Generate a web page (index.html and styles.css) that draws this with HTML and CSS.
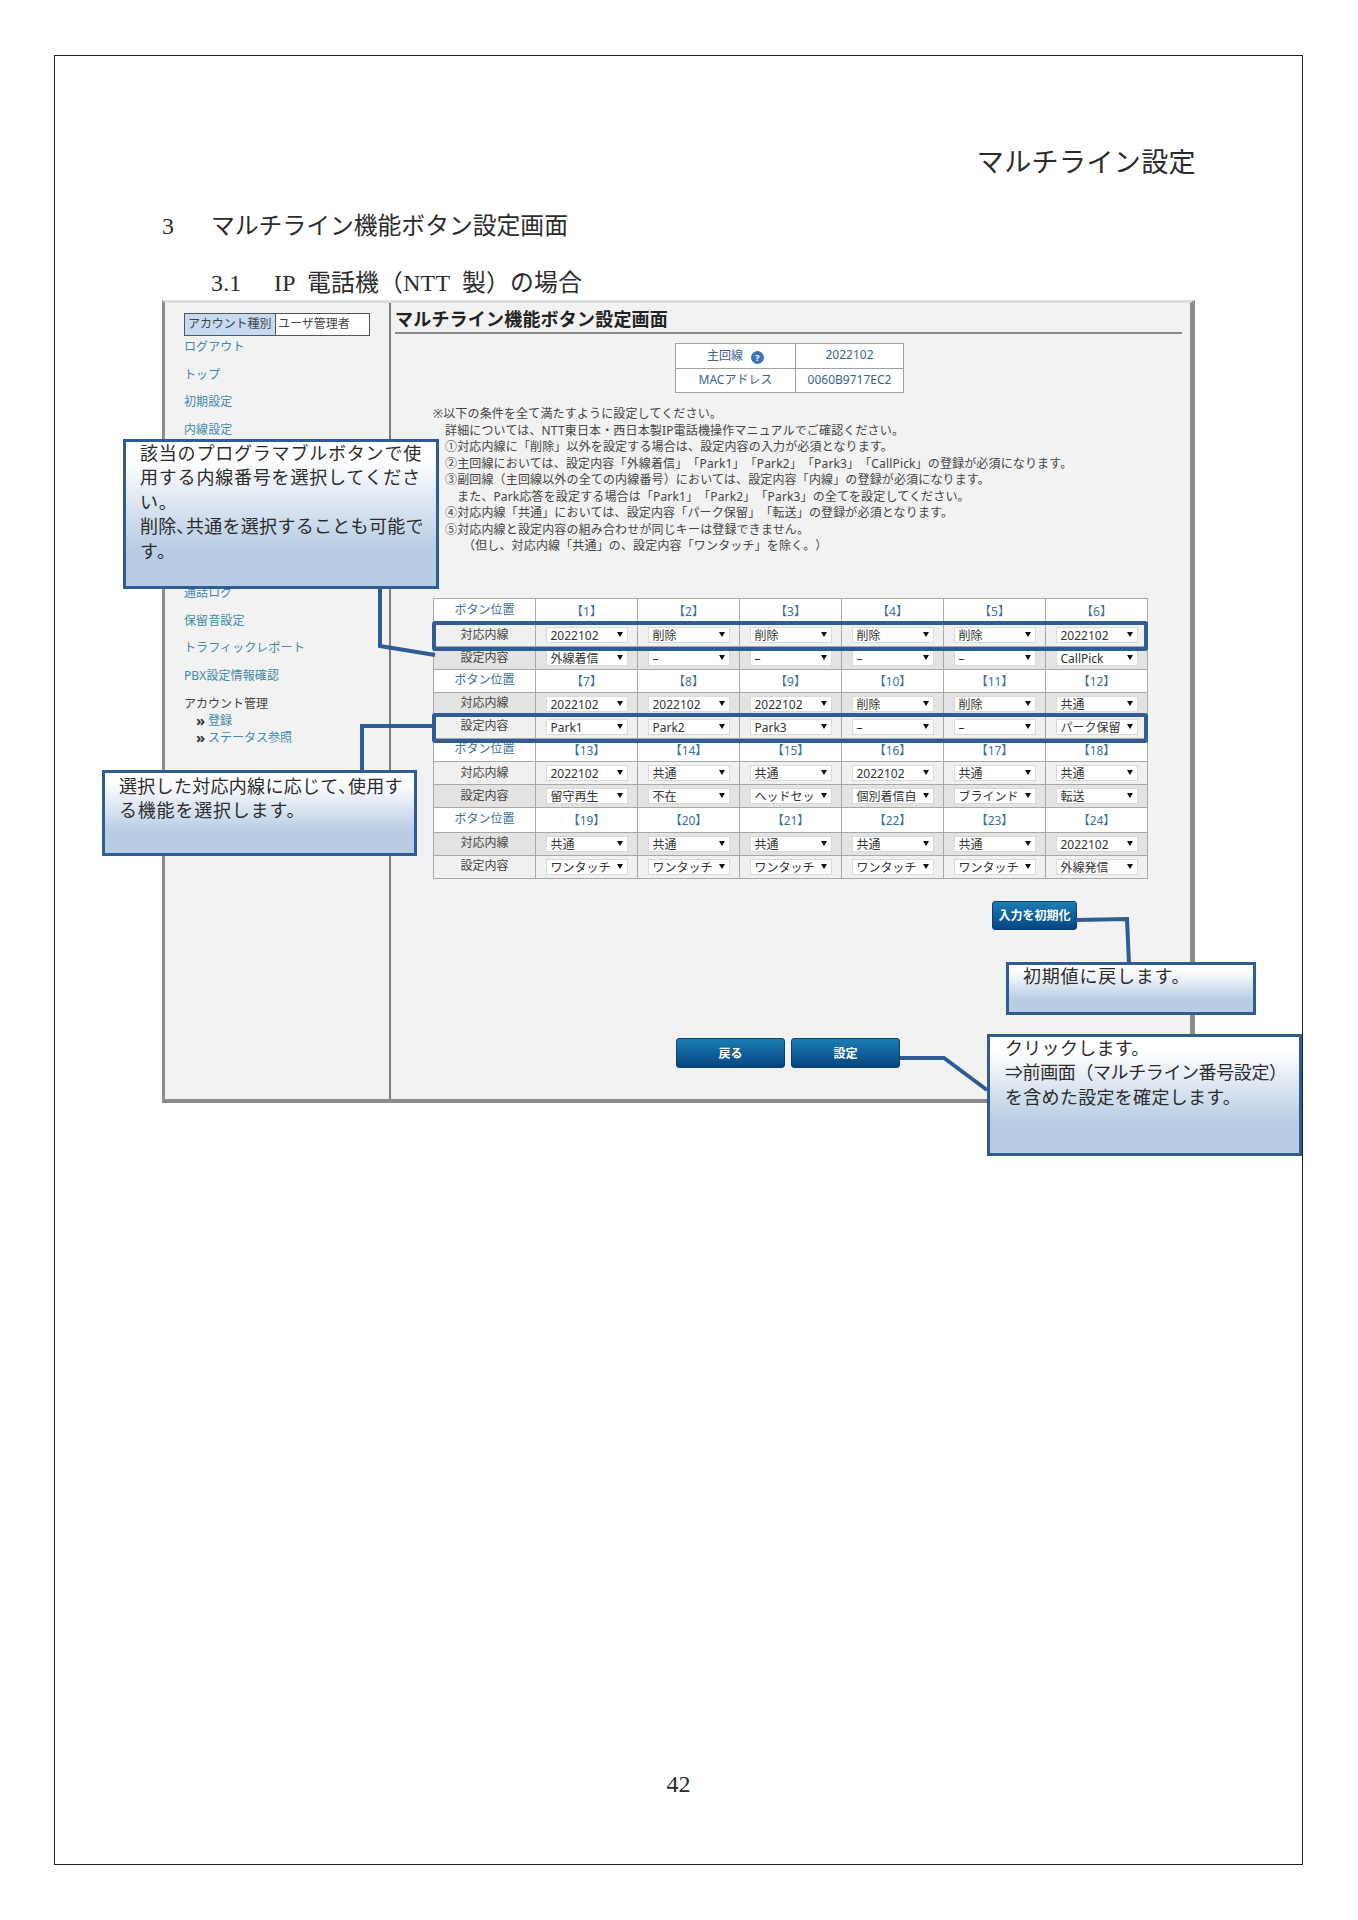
FILE: index.html
```html
<!DOCTYPE html>
<html lang="ja">
<head>
  <meta charset="UTF-8">
  <title>マルチライン設定</title>
  <link rel="stylesheet" href="styles.css">
</head>
<body>
  <div class="page">
    <div class="doc-title">マルチライン設定</div>
    <h2 class="doc-h2"><span class="h2-no">3</span><span>マルチライン機能ボタン設定画面</span></h2>
    <h3 class="doc-h3"><span class="h3-no">3.1</span><span>IP 電話機（NTT 製）の場合</span></h3>

    <div class="shot">
      <div class="side">
        <div class="account"><span class="account-label">アカウント種別</span><span class="account-value">ユーザ管理者</span></div>
        <a class="nav first">ログアウト</a>
        <a class="nav">トップ</a>
        <a class="nav">初期設定</a>
        <a class="nav">内線設定</a>
        <a class="nav after-gap">通話ログ</a>
        <a class="nav">保留音設定</a>
        <a class="nav">トラフィックレポート</a>
        <a class="nav">PBX設定情報確認</a>
        <div class="nav-head">アカウント管理</div>
        <a class="nav-sub">登録</a>
        <a class="nav-sub">ステータス参照</a>
      </div>

      <div class="main">
        <h1 class="main-title">マルチライン機能ボタン設定画面</h1>

        <table class="info">
          <tr><td class="info-key">主回線<span class="help">?</span></td><td>2022102</td></tr>
          <tr><td class="info-key">MACアドレス</td><td>0060B9717EC2</td></tr>
        </table>

        <div class="notes">
          <div>※以下の条件を全て満たすように設定してください。</div>
          <div class="in1">詳細については、NTT東日本・西日本製IP電話機操作マニュアルでご確認ください。</div>
          <div class="in1">①対応内線に「削除」以外を設定する場合は、設定内容の入力が必須となります。</div>
          <div class="in1">②主回線においては、設定内容「外線着信」「Park1」「Park2」「Park3」「CallPick」の登録が必須になります。</div>
          <div class="in1">③副回線（主回線以外の全ての内線番号）においては、設定内容「内線」の登録が必須になります。</div>
          <div class="in2">また、Park応答を設定する場合は「Park1」「Park2」「Park3」の全てを設定してください。</div>
          <div class="in1">④対応内線「共通」においては、設定内容「パーク保留」「転送」の登録が必須となります。</div>
          <div class="in1">⑤対応内線と設定内容の組み合わせが同じキーは登録できません。</div>
          <div class="in3">（但し、対応内線「共通」の、設定内容「ワンタッチ」を除く。）</div>
        </div>

        <table class="keys">
          <tr class="head head-first"><th>ボタン位置</th><td>【1】</td><td>【2】</td><td>【3】</td><td>【4】</td><td>【5】</td><td>【6】</td></tr>
          <tr class="light"><th>対応内線</th><td><div class="sel">2022102</div></td><td><div class="sel">削除</div></td><td><div class="sel">削除</div></td><td><div class="sel">削除</div></td><td><div class="sel">削除</div></td><td><div class="sel">2022102</div></td></tr>
          <tr class="dark"><th>設定内容</th><td><div class="sel">外線着信</div></td><td><div class="sel">–</div></td><td><div class="sel">–</div></td><td><div class="sel">–</div></td><td><div class="sel">–</div></td><td><div class="sel">CallPick</div></td></tr>
          <tr class="head head-second"><th>ボタン位置</th><td>【7】</td><td>【8】</td><td>【9】</td><td>【10】</td><td>【11】</td><td>【12】</td></tr>
          <tr class="dark"><th>対応内線</th><td><div class="sel">2022102</div></td><td><div class="sel">2022102</div></td><td><div class="sel">2022102</div></td><td><div class="sel">削除</div></td><td><div class="sel">削除</div></td><td><div class="sel">共通</div></td></tr>
          <tr class="light"><th>設定内容</th><td><div class="sel">Park1</div></td><td><div class="sel">Park2</div></td><td><div class="sel">Park3</div></td><td><div class="sel">–</div></td><td><div class="sel">–</div></td><td><div class="sel">パーク保留</div></td></tr>
          <tr class="head"><th>ボタン位置</th><td>【13】</td><td>【14】</td><td>【15】</td><td>【16】</td><td>【17】</td><td>【18】</td></tr>
          <tr class="light"><th>対応内線</th><td><div class="sel">2022102</div></td><td><div class="sel">共通</div></td><td><div class="sel">共通</div></td><td><div class="sel">2022102</div></td><td><div class="sel">共通</div></td><td><div class="sel">共通</div></td></tr>
          <tr class="dark"><th>設定内容</th><td><div class="sel">留守再生</div></td><td><div class="sel">不在</div></td><td><div class="sel">ヘッドセッ</div></td><td><div class="sel">個別着信自</div></td><td><div class="sel">ブラインド</div></td><td><div class="sel">転送</div></td></tr>
          <tr class="head head-last"><th>ボタン位置</th><td>【19】</td><td>【20】</td><td>【21】</td><td>【22】</td><td>【23】</td><td>【24】</td></tr>
          <tr class="dark"><th>対応内線</th><td><div class="sel">共通</div></td><td><div class="sel">共通</div></td><td><div class="sel">共通</div></td><td><div class="sel">共通</div></td><td><div class="sel">共通</div></td><td><div class="sel">2022102</div></td></tr>
          <tr class="light"><th>設定内容</th><td><div class="sel">ワンタッチ</div></td><td><div class="sel">ワンタッチ</div></td><td><div class="sel">ワンタッチ</div></td><td><div class="sel">ワンタッチ</div></td><td><div class="sel">ワンタッチ</div></td><td><div class="sel">外線発信</div></td></tr>
        </table>

        <button class="btn btn-reset">入力を初期化</button>
        <div class="btn-row">
          <button class="btn btn-wide">戻る</button>
          <button class="btn btn-wide">設定</button>
        </div>
      </div>
    </div>

    <div class="page-no">42</div>
  </div>

  <!-- annotations drawn over the screenshot -->
  <div class="mark mark-row1"></div>
  <div class="mark mark-row2"></div>

  <svg class="leaders" width="1358" height="1920" viewBox="0 0 1358 1920" fill="none" stroke="#2f5c94" stroke-width="4">
    <path d="M380 586V646L435 655"/>
    <path d="M432 726H362V772"/>
    <path d="M1076 920L1127 919L1129 964"/>
    <path d="M900 1058H944L987 1090"/>
  </svg>

  <div class="callout callout-a">該当のプログラマブルボタンで使<br>用する内線番号を選択してくださ<br>い。<br><span class="tight">削除､共通を選択することも可能で</span><br>す。</div>
  <div class="callout callout-b"><span class="tight">選択した対応内線に応じて､使用す</span><br>る機能を選択します。</div>
  <div class="callout callout-c">初期値に戻します。</div>
  <div class="callout callout-d">クリックします。<br><span class="tighter">⇒前画面（マルチライン番号設定）</span><br>を含めた設定を確定します。</div>
</body>
</html>
```

FILE: styles.css
```css
* {
  box-sizing: border-box;
}
body {
  margin: 0;
  width: 1358px;
  height: 1920px;
  position: relative;
  background-color: #fff;
  font-family: "Liberation Serif", "Noto Sans CJK JP", serif;
  color: #2b2b2b;
  text-spacing-trim: space-all;
}

/* document page */
.page {
  position: absolute;
  left: 54px;
  top: 55px;
  width: 1249px;
  height: 1810px;
  border: 1.5px solid #222;
  padding-top: 88px;
}
.doc-title {
  font-size: 27px;
  line-height: 38px;
  letter-spacing: 0.4px;
  text-align: right;
  padding-right: 106px;
  font-weight: 400;
}
.doc-h2 {
  display: flex;
  margin: 28px 0 0 107px;
  font-size: 23.8px;
  line-height: 32px;
  font-weight: 400;
}
.h2-no {
  width: 49px;
}
.doc-h3 {
  display: flex;
  margin: 25px 0 0 156px;
  font-size: 23.8px;
  line-height: 32px;
  font-weight: 400;
  letter-spacing: 0.25px;
  word-spacing: 6px;
}
.h3-no {
  width: 63px;
}
.page-no {
  position: absolute;
  left: 0;
  right: 0;
  top: 1716px;
  text-align: center;
  font-size: 24px;
  line-height: 24px;
}

/* screenshot of the admin screen */
.shot {
  display: flex;
  margin: 1px 0 0 107px;
  width: 1033px;
  height: 803px;
  background-color: #f2f2f2;
  border-top: 3px solid #dcdcdc;
  border-left: 3px solid #8c8c8c;
  border-right: 5px solid #8c8c8c;
  border-bottom: 4px solid #8c8c8c;
  font-family: "Noto Sans", "Noto Sans CJK JP", sans-serif;
  font-size: 12px;
  color: #444;
}
.side {
  width: 226px;
  flex-shrink: 0;
  padding: 10px 0 0 19px;
  border-right: 2px solid #7d7d7d;
}
.account {
  display: flex;
  width: 186px;
  height: 23px;
  line-height: 20px;
  border: 1px solid #555;
  background-color: #fff;
}
.account-label {
  width: 91px;
  padding-left: 3px;
  background-color: #c6daf2;
  border-right: 1px solid #555;
  white-space: nowrap;
  letter-spacing: -0.1px;
}
.account-value {
  padding-left: 2px;
}
.nav {
  display: block;
  height: 16px;
  line-height: 16px;
  margin-bottom: 11.5px;
  letter-spacing: 0.1px;
  color: #3f8bab;
}
.nav.first {
  margin-top: 3px;
}
.nav.after-gap {
  margin-top: 147.5px;
}
.nav-head {
  height: 18px;
  line-height: 18px;
}
.nav-sub {
  display: block;
  height: 16.5px;
  line-height: 16.5px;
  padding-left: 24px;
  position: relative;
  color: #3f8bab;
}
.nav-sub::before {
  content: "»";
  position: absolute;
  left: 12px;
  top: -1px;
  font-weight: 700;
  font-size: 15px;
  color: #333;
}

.main {
  flex: 1;
  padding: 5px 8px 0 4px;
}
.main-title {
  margin: 0;
  height: 26px;
  line-height: 22px;
  font-size: 18px;
  font-weight: 700;
  letter-spacing: 0.2px;
  color: #222;
  border-bottom: 2px solid #8a8a8a;
  white-space: nowrap;
}
.info {
  margin: 9px 0 0 280px;
  width: 229px;
  border-collapse: collapse;
  table-layout: fixed;
  background-color: #fff;
}
.info td {
  height: 24.5px;
  padding: 0 0 2px;
  border: 1px solid #a0a0a0;
  text-align: center;
  color: #3c6488;
}
.info-key {
  width: 120px;
}
.help {
  display: inline-block;
  width: 13px;
  height: 13px;
  margin-left: 8px;
  border-radius: 50%;
  background-color: #3d73b5;
  color: #fff;
  font-size: 9px;
  font-weight: 700;
  line-height: 13px;
  vertical-align: -1px;
}
.notes {
  margin: 13px 0 0 38px;
  line-height: 16.5px;
  letter-spacing: 0.15px;
  white-space: nowrap;
  color: #444;
}
.in1 {
  padding-left: 12px;
}
.in2 {
  padding-left: 24px;
}
.in3 {
  padding-left: 30px;
}

.keys {
  margin: 43px 0 0 38px;
  width: 715px;
  table-layout: fixed;
  border-collapse: collapse;
}
.keys th,
.keys td {
  padding: 0;
  border: 1px solid #a8a8a8;
  text-align: center;
  font-weight: 400;
  height: 23px;
}
.keys th {
  padding-bottom: 3px;
}
.keys .head th,
.keys .head td {
  height: 23.5px;
  background-color: #fff;
  color: #3c7199;
}
.keys .head-first th,
.keys .head-first td {
  height: 25.5px;
}
.keys .head-second th,
.keys .head-second td {
  height: 22.5px;
}
.keys .head-last th,
.keys .head-last td {
  height: 24.5px;
}
.keys .light th,
.keys .light td {
  background-color: #f0f0f0;
}
.keys .dark th,
.keys .dark td {
  background-color: #e3e3e3;
}
.sel {
  position: relative;
  width: 82px;
  height: 16px;
  margin: 0 auto;
  padding-left: 4px;
  border: 1px solid #dadada;
  background-color: #fff;
  line-height: 15px;
  text-align: left;
  white-space: nowrap;
  overflow: hidden;
  color: #333;
}
.sel::after {
  content: "";
  position: absolute;
  right: 4px;
  top: 4px;
  border-left: 3px solid transparent;
  border-right: 3px solid transparent;
  border-top: 5px solid #111;
}

.btn {
  display: block;
  padding: 0;
  border: 1px solid #0b3f6e;
  border-radius: 3px;
  background: linear-gradient(#1a7db3, #064680);
  color: #fff;
  font-family: inherit;
  font-size: 12px;
  font-weight: 700;
}
.btn-reset {
  width: 85px;
  height: 29px;
  margin: 22px 0 0 597px;
}
.btn-row {
  display: flex;
  gap: 6px;
  margin: 108px 0 0 281px;
}
.btn-wide {
  width: 109px;
  height: 30px;
}

/* overlays */
.mark {
  position: absolute;
  left: 432px;
  width: 716px;
  height: 30px;
  border: 4px solid #2f5c94;
  border-radius: 3px;
}
.mark-row1 {
  top: 621px;
}
.mark-row2 {
  top: 713px;
}
.leaders {
  position: absolute;
  left: 0;
  top: 0;
}
.callout {
  position: absolute;
  padding-left: 14px;
  border: 3px solid #2f5c94;
  background: linear-gradient(#fff 12%, #b8cce4 74%);
  font-size: 18px;
  letter-spacing: 0.8px;
  line-height: 24.4px;
  white-space: nowrap;
}
.tight {
  letter-spacing: 0.3px;
}
.tighter {
  letter-spacing: -0.4px;
}
.callout-a {
  left: 123px;
  top: 439px;
  width: 316px;
  height: 150px;
}
.callout-b {
  left: 102px;
  top: 770px;
  width: 315px;
  height: 86px;
  padding-top: 2px;
}
.callout-c {
  left: 1006px;
  top: 962px;
  width: 250px;
  height: 53px;
}
.callout-d {
  left: 987px;
  top: 1034px;
  width: 315px;
  height: 122px;
  padding-left: 15px;
  letter-spacing: 0.3px;
}
```
